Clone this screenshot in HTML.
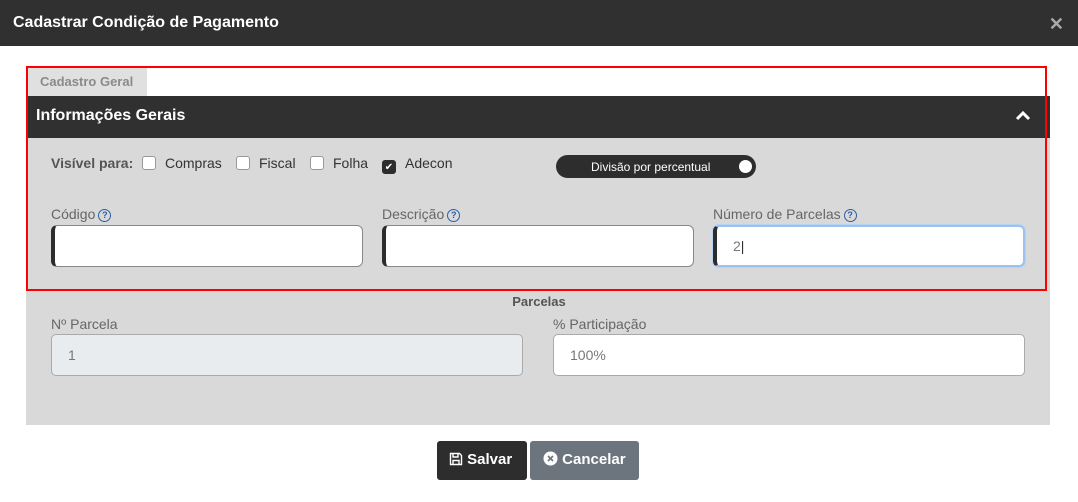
<!DOCTYPE html>
<html><head><meta charset="utf-8"><style>
*{box-sizing:border-box;margin:0;padding:0}
body{width:1078px;height:502px;background:#fff;font-family:"Liberation Sans",Arial,sans-serif;position:relative;overflow:hidden}
.abs{position:absolute}
.hdr{left:0;top:0;width:1078px;height:46px;background:#303030;color:#fff;font-weight:bold;font-size:16px;padding:14px 0 0 13px}
.x{right:14px;top:14px;color:#aaa;font-size:18px;font-weight:bold}
.panel{left:26px;top:138px;width:1024px;height:287px;background:#d9d9d9}
.sec{left:28px;top:96px;width:1022px;height:42px;background:#303030;color:#fff;font-weight:bold;font-size:16px;padding:11px 0 0 8px}
.tab{left:28px;top:68px;width:119px;height:28px;background:#e0e0e0;color:#8a8a8a;font-size:13px;font-weight:bold;padding:6px 0 0 12px}
.red{left:26px;top:66px;width:1021px;height:225px;border:2px solid #f00}
.lbl{font-size:14px;color:#666}
.q{display:inline-block;width:13px;height:13px;border:1.5px solid #2a5fa8;border-radius:50%;color:#2a5fa8;font-size:9px;font-weight:bold;text-align:center;line-height:10px;vertical-align:1px;margin-left:3px}
.inp{height:42px;background:#fff;border:1px solid #888;border-left:4px solid #2d2d2d;border-radius:6px}
.inp2{height:42px;background:#fff;border:1px solid #aaa;border-radius:5px;font-size:14px;color:#777;padding:12px 0 0 16px}
.cb{display:inline-block;width:14px;height:14px;border:1px solid #999;border-radius:3px;background:#fff;vertical-align:-2px;margin-right:9px}
.chk{font-size:14px;color:#333}
</style></head><body>
<div class="abs hdr">Cadastrar Condição de Pagamento</div>
<div class="abs x">✕</div>
<div class="abs panel"></div>
<div class="abs tab">Cadastro Geral</div>
<div class="abs sec">Informações Gerais</div>
<svg class="abs" style="left:1015px;top:110px" width="16" height="12" viewBox="0 0 16 12"><path d="M2 9 L8 3 L14 9" stroke="#fff" stroke-width="3" fill="none"/></svg>
<div class="abs chk" style="left:51px;top:155px"><b style="color:#555">Visível para:</b></div>
<div class="abs chk" style="left:142px;top:155px"><span class="cb"></span>Compras</div>
<div class="abs chk" style="left:236px;top:155px"><span class="cb"></span>Fiscal</div>
<div class="abs chk" style="left:310px;top:155px"><span class="cb"></span>Folha</div>
<div class="abs chk" style="left:382px;top:155px"><span class="cb" style="background:#2d2d2d;border-color:#2d2d2d;color:#fff;font-size:10px;text-align:center;line-height:13px">✔</span>Adecon</div>
<div class="abs" style="left:556px;top:155px;width:200px;height:23px;background:#2d2d2d;border-radius:12px;color:#fff;font-size:12px;padding:5px 0 0 35px">Divisão por percentual<span class="abs" style="right:4px;top:5px;width:13px;height:13px;border-radius:50%;background:#fff"></span></div>
<div class="abs lbl" style="left:51px;top:206px">Código<span class="q">?</span></div>
<div class="abs lbl" style="left:382px;top:206px">Descrição<span class="q">?</span></div>
<div class="abs lbl" style="left:713px;top:206px">Número de Parcelas<span class="q">?</span></div>
<div class="abs inp" style="left:51px;top:225px;width:312px"></div>
<div class="abs inp" style="left:382px;top:225px;width:312px"></div>
<div class="abs inp" style="left:713px;top:225px;width:312px;border-color:#9cc2ee;border-width:2px;border-left:4px solid #2d2d2d;box-shadow:0 0 0 1px #b7d3f2;font-size:14px;color:#777;padding:11px 0 0 16px">2<span style="color:#333">|</span></div>
<div class="abs red"></div>
<div class="abs" style="left:0;width:1078px;top:294px;text-align:center;font-size:13px;font-weight:bold;color:#555">Parcelas</div>
<div class="abs lbl" style="left:51px;top:316px">Nº Parcela</div>
<div class="abs lbl" style="left:553px;top:316px">% Participação</div>
<div class="abs inp2" style="left:51px;top:334px;width:472px;background:#e9ecef">1</div>
<div class="abs inp2" style="left:553px;top:334px;width:472px">100%</div>
<div class="abs" style="left:437px;top:441px;width:90px;height:39px;background:#2d2d2d;border-radius:3px;color:#fff;font-weight:bold;font-size:15px;padding:10px 0 0 12px">
<svg width="14" height="14" viewBox="0 0 14 14" style="vertical-align:-2px"><path d="M1.5 1.5h9l2 2v9h-11z M4 1.5v3.5h5v-3.5 M4 12.5v-4h6v4" stroke="#fff" stroke-width="1.4" fill="none"/></svg> Salvar</div>
<div class="abs" style="left:530px;top:441px;width:109px;height:39px;background:#6c757d;border-radius:3px;color:#fff;font-weight:bold;font-size:15px;padding:10px 0 0 13px">
<svg width="15" height="15" viewBox="0 0 15 15" style="vertical-align:-2px"><circle cx="7.5" cy="7.5" r="7" fill="#fff"/><path d="M5 5l5 5M10 5l-5 5" stroke="#6c757d" stroke-width="1.6"/></svg> Cancelar</div>
</body></html>
